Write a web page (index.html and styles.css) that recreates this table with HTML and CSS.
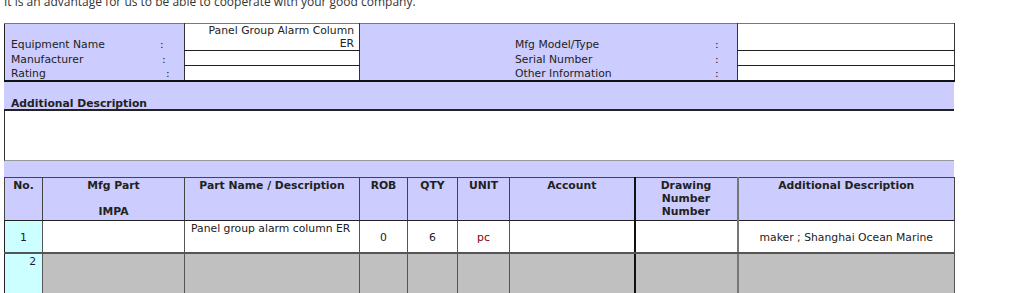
FILE: index.html
```html
<!DOCTYPE html>
<html>
<head>
<meta charset="utf-8">
<link rel="stylesheet" href="styles.css">
</head>
<body>
<div class="page">
  <p class="intro">It is an advantage for us to be able to cooperate with your good company.</p>

  <table class="equip">
    <colgroup>
      <col class="w-lbl"><col class="w-val"><col class="w-mid"><col class="w-rval">
    </colgroup>
    <tr class="er1">
      <td class="lbl"><span class="ltxt l1">Equipment Name</span>:</td>
      <td class="val right">Panel Group Alarm Column<br>ER</td>
      <td class="lbl mid"><span class="mtxt">Mfg Model/Type</span>:</td>
      <td class="val"></td>
    </tr>
    <tr class="er2">
      <td class="lbl"><span class="ltxt l2">Manufacturer</span>:</td>
      <td class="val"></td>
      <td class="lbl mid"><span class="mtxt">Serial Number</span>:</td>
      <td class="val"></td>
    </tr>
    <tr class="er3">
      <td class="lbl"><span class="ltxt l3">Rating</span>:</td>
      <td class="val"></td>
      <td class="lbl mid"><span class="mtxt">Other Information</span>:</td>
      <td class="val"></td>
    </tr>
  </table>

  <div class="add-head">Additional Description</div>
  <div class="add-box"></div>
  <div class="band"></div>

  <table class="items">
    <colgroup>
      <col class="c-no"><col class="c-mfg"><col class="c-name"><col class="c-rob"><col class="c-qty"><col class="c-unit"><col class="c-acc"><col class="c-draw"><col class="c-add">
    </colgroup>
    <tr class="head">
      <th>No.</th>
      <th>Mfg Part<br><br>IMPA</th>
      <th>Part Name / Description</th>
      <th>ROB</th>
      <th>QTY</th>
      <th>UNIT</th>
      <th class="acc">Account</th>
      <th class="draw">Drawing<br>Number<br>Number</th>
      <th>Additional Description</th>
    </tr>
    <tr class="row1">
      <td class="no">1</td>
      <td></td>
      <td class="desc">Panel group alarm column ER</td>
      <td>0</td>
      <td>6</td>
      <td class="unit">pc</td>
      <td class="acc"></td>
      <td class="draw"></td>
      <td>maker ; Shanghai Ocean Marine</td>
    </tr>
    <tr class="row2">
      <td class="no no2">2</td>
      <td></td>
      <td></td>
      <td></td>
      <td></td>
      <td></td>
      <td class="acc"></td>
      <td class="draw"></td>
      <td></td>
    </tr>
  </table>
</div>
</body>
</html>
```

FILE: styles.css
```css
html, body {
  margin: 0;
  padding: 0;
  background: #ffffff;
}

.page {
  padding: 0 0 0 4px;
}

.intro {
  margin: -7px 0 0 0;
  font-family: "Open Sans", sans-serif;
  font-size: 12px;
  line-height: 17px;
  color: #333333;
  height: 30px;
}

table {
  border-collapse: collapse;
  table-layout: fixed;
  width: 950px;
  font-family: "DejaVu Sans", Verdana, sans-serif;
  font-size: 10.8px;
  line-height: 13px;
  color: #222222;
}

td, th {
  padding: 0;
}

/* equipment block */
.equip {
  border-top: 1px solid #777777;
  border-left: 1px solid #222222;
  border-bottom: 2px solid #111111;
}

.w-lbl { width: 180px; }
.w-val { width: 175px; }
.w-mid { width: 378px; }
.w-rval { width: 217px; }

.equip .lbl {
  background: #ccccff;
  vertical-align: bottom;
  white-space: nowrap;
  padding-left: 6px;
}

.equip .mid {
  padding-left: 155px;
}

.ltxt {
  display: inline-block;
}
.l1 { width: 149px; }
.l2 { width: 151px; }
.l3 { width: 155px; }

.mtxt {
  display: inline-block;
  width: 200px;
}

.equip .val {
  background: #ffffff;
  border-left: 1px solid #333333;
  border-right: 1px solid #333333;
  border-bottom: 1px solid #222222;
  vertical-align: top;
}

.equip .right {
  text-align: right;
  padding-right: 5px;
}

.er1 { height: 26px; }
.er2 { height: 15px; }
.er3 { height: 15px; }

.equip .er3 .val {
  border-bottom: none;
}

/* additional description */
.add-head {
  width: 943px;
  height: 27px;
  background: #ccccff;
  border-bottom: 2px solid #222222;
  padding-left: 7px;
  font-family: "DejaVu Sans", Verdana, sans-serif;
  font-size: 10.8px;
  font-weight: bold;
  line-height: 10px;
  color: #222222;
  display: flex;
  align-items: flex-end;
}

.add-box {
  width: 949px;
  height: 49px;
  border-left: 1px solid #333333;
  border-bottom: 1px solid #999999;
  background: #ffffff;
}

.band {
  width: 950px;
  height: 16px;
  background: #ccccff;
}

/* items table */
.items {
  border: 1px solid #222222;
}

.c-no { width: 38px; }
.c-mfg { width: 142px; }
.c-name { width: 175px; }
.c-rob { width: 48px; }
.c-qty { width: 50px; }
.c-unit { width: 52px; }
.c-acc { width: 125px; }
.c-draw { width: 103px; }
.c-add { width: 217px; }

.items th {
  background: #ccccff;
  font-weight: bold;
  text-align: center;
  vertical-align: top;
  padding-top: 1px;
  border: 1px solid #444444;
  border-bottom: 1px solid #222222;
}

.items .head { height: 43px; }

.items td {
  text-align: center;
  vertical-align: middle;
  border: 1px solid #555555;
  background: #ffffff;
}

.items .acc {
  border-right: 2px solid #111111;
}

.items .draw {
  border-right: 2px solid #777777;
}

.items .row1 { height: 33px; }
.items .row1 td { border-bottom: 2px solid #555555; padding-top: 2px; }

.items .row1 td.desc {
  text-align: left;
  vertical-align: top;
  padding: 1px 0 0 6px;
}

.items .unit {
  color: #800000;
}

.items td.no {
  background: #ccffff;
  border-left: 1px solid #222222;
}

.items .row2 { height: 48px; }

.items .row2 td {
  background: #c0c0c0;
  vertical-align: top;
}

.items .row2 td.no2 {
  background: #ccffff;
  text-align: right;
  padding: 1px 6px 0 0;
}
```
